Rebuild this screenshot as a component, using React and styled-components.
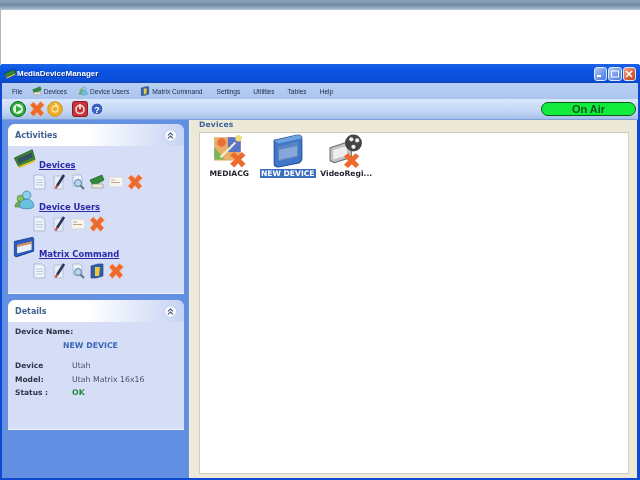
import React from "react";
import styled, { createGlobalStyle } from "styled-components";

const GlobalStyle = createGlobalStyle`
  html, body {
    margin: 0;
    padding: 0;
    width: 640px;
    height: 480px;
    overflow: hidden;
    background: #fff;
    font-family: "DejaVu Sans", Verdana, sans-serif;
  }
`;

const Page = styled.div`
  width: 640px;
  height: 480px;
  display: flex;
  flex-direction: column;
  overflow: hidden;
`;
const TopStrip = styled.div`
  height: 10px;
  background: linear-gradient(#8aa3bb, #6f8ba6 50%, #b3c3d3);
`;
const BlankBand = styled.div`
  height: 54px;
  background: #fff;
  border-left: 1px solid #b9b4a8;
`;
const Window = styled.div`
  flex: 1;
  display: flex;
  flex-direction: column;
  min-height: 0;
  background: #0f49d2;
  padding: 0 2px 2px 2px;
  border-radius: 3px 3px 0 0;
  filter: blur(0.35px);
`;
const TitleBar = styled.div`
  height: 19px;
  margin: 0 -2px;
  padding: 0 4px 0 4px;
  display: flex;
  align-items: center;
  gap: 1px;
  background: linear-gradient(#1b63e6, #0c55e2 30%, #0a50dc 80%, #0c46be);
  border-radius: 3px 3px 0 0;
`;
const LogoSlot = styled.span`
  display: flex;
`;
const TitleText = styled.span`
  flex: 1;
  color: #fff;
  font-family: "Liberation Sans", Arial, sans-serif;
  font-size: 8px;
  font-weight: bold;
  text-shadow: 1px 1px 0 #0a2f8c;
`;
const WinButton = styled.div`
  width: 13.5px;
  height: 14px;
  box-sizing: border-box;
  border: 1px solid #dfe8fb;
  border-radius: 3px;
  background: ${(p) =>
    p.$close
      ? "linear-gradient(135deg, #eea58a, #dd5f36 60%, #c2451f)"
      : "linear-gradient(135deg, #b4c9f5, #6e95e8 60%, #4f78da)"};
  display: flex;
  align-items: center;
  justify-content: center;
`;
const MenuBar = styled.div`
  height: 16px;
  display: flex;
  align-items: center;
  padding-left: 10px;
  background: linear-gradient(#b9cff3, #abc5ef);
  font-family: "Liberation Sans", Arial, sans-serif;
  font-size: 6.6px;
  color: #1c2a4a;
`;
const MenuItem = styled.span`
  display: flex;
  align-items: center;
  gap: 2px;
  margin-right: ${(p) => p.$gap}px;
`;
const MenuGlyph = styled.span`
  display: flex;
  svg {
    width: 10px;
    height: 10px;
  }
`;
const Toolbar = styled.div`
  height: 21px;
  display: flex;
  align-items: center;
  padding: 0 2px 0 8px;
  background: linear-gradient(#dbe8fb, #c3d7f6 60%, #a5bfe9);
  border-bottom: 1px solid #7f9fd8;
  box-sizing: border-box;
`;
const ToolIcon = styled.span`
  display: flex;
  margin-right: ${(p) => p.$gap || 0}px;
`;
const OnAir = styled.div`
  margin-left: auto;
  width: 95px;
  height: 14px;
  box-sizing: border-box;
  border: 1px solid #0c5a1a;
  border-radius: 7px;
  background: #12ec3c;
  color: #0b5a1c;
  font-family: "Liberation Sans", Arial, sans-serif;
  font-size: 11px;
  font-weight: bold;
  line-height: 12px;
  text-align: center;
`;
const Main = styled.div`
  flex: 1;
  min-height: 0;
  display: flex;
`;
const Sidebar = styled.div`
  width: 187px;
  padding: 4px 5px 0 6px;
  box-sizing: border-box;
  display: flex;
  flex-direction: column;
  gap: 6px;
  background: #6390e2;
`;
const Panel = styled.div`
  height: ${(p) => p.$height}px;
  display: flex;
  flex-direction: column;
  background: #d5def6;
  border-radius: 7px 7px 0 0;
  border-bottom: 1px solid #f0f4fc;
  box-sizing: border-box;
  overflow: hidden;
`;
const PanelHead = styled.div`
  height: 22px;
  flex-shrink: 0;
  display: flex;
  align-items: center;
  justify-content: space-between;
  padding: 0 7px;
  background: linear-gradient(90deg, #fff, #fff 45%, #c6d3f5);
  color: #40608f;
  font-size: 8px;
  font-weight: bold;
`;
const Chevron = styled.div`
  width: 11px;
  height: 11px;
  border-radius: 50%;
  background: #f5f7fd;
  border: 1px solid #c2cce6;
  display: flex;
  align-items: center;
  justify-content: center;
`;
const ActivityList = styled.div`
  padding: 1px 0 0 5px;
  display: flex;
  flex-direction: column;
`;
const Activity = styled.div`
  height: ${(p) => p.$height}px;
  display: grid;
  grid-template-columns: 26px auto;
  grid-template-rows: 24px auto;
  justify-content: start;
`;
const ActivityIcon = styled.div`
  grid-row: 1;
  grid-column: 1;
`;
const ActivityLink = styled.a`
  grid-row: 1;
  grid-column: 2;
  align-self: end;
  color: #2a2aa8;
  font-size: 8.4px;
  font-weight: bold;
  text-decoration: underline;
  line-height: 11px;
`;
const ActionRow = styled.div`
  grid-row: 2;
  grid-column: 2;
  display: flex;
  gap: 3px;
  margin: 2.5px 0 0 -7px;
`;
const Details = styled.div`
  padding: 5px 0 0 7px;
  font-size: 7.8px;
  color: #3a4256;
`;
const FieldLabel = styled.div`
  font-size: 7.5px;
  font-weight: bold;
  color: #2c3346;
`;
const DeviceTitle = styled.div`
  margin: 5px 0 9px 48px;
  color: #3a66b8;
  font-weight: bold;
`;
const InfoRow = styled.div`
  display: grid;
  grid-template-columns: 57px auto;
  height: 13.5px;
  align-items: center;
`;
const InfoValue = styled.span`
  color: ${(p) => p.$color || "#4a5268"};
  font-weight: ${(p) => (p.$bold ? "bold" : "normal")};
`;
const Content = styled.div`
  flex: 1;
  display: flex;
  flex-direction: column;
  background: #ece9d8;
  padding: 0 8px 4px 9px;
  margin-right: 1px;
  border-left: 1px solid #f4f2e6;
`;
const ContentTitle = styled.div`
  height: 12px;
  line-height: 10px;
  color: #3c5f98;
  font-size: 7.6px;
  font-weight: bold;
  letter-spacing: 0.2px;
`;
const Canvas = styled.div`
  flex: 1;
  background: #fff;
  border: 1px solid #cfccbd;
  padding: 1px 0 0 0;
  display: flex;
  align-items: flex-start;
`;
const DeviceItem = styled.div`
  width: 58.5px;
  display: flex;
  flex-direction: column;
  align-items: center;
  gap: 1px;
  font-size: 7.6px;
  font-weight: bold;
  color: #23262f;
`;
const DeviceLabel = styled.span`
  padding: 0 1px;
  line-height: 9px;
  white-space: nowrap;
  background: ${(p) => (p.$selected ? "#3a6fc0" : "transparent")};
  color: ${(p) => (p.$selected ? "#fff" : "inherit")};
`;

// icons
const Svg = ({ s = 16, children }) => (
  <svg width={s} height={s} viewBox="0 0 16 16" style={{ display: "block", overflow: "visible" }}>
    {children}
  </svg>
);
const Cross = ({ s = 16 }) => (
  <Svg s={s}>
    <path
      d="M1 4 4.500 1 8 4.500 11.500.5 15.500 4 11.500 8 15 12 11.500 15.500 8 11.500 4.500 15.500 1 12 4.500 8Z"
      fill="#ee6a2c"
      stroke="#f8b088"
      strokeWidth=".7"
    />
  </Svg>
);
const Doc = () => (
  <Svg>
    <path d="M2 1h8l3 3v11H2Z" fill="#eef3fb" stroke="#a9bbd6" />
    <path d="M4 6h7M4 8.500h7M4 11h7" stroke="#bccade" />
  </Svg>
);
const Pencil = () => (
  <Svg>
    <path d="M3 2h9v13H3Z" fill="#e8edf8" stroke="#b3c1da" />
    <path d="M13 1 6 12" stroke="#2c3558" strokeWidth="2.600" />
    <path d="M6.500 11 4.500 14.500" stroke="#b8452f" strokeWidth="2" />
  </Svg>
);
const Search = () => (
  <Svg>
    <path d="M3 1h7l2 2v9H3Z" fill="#eef3fb" stroke="#aebdd6" />
    <circle cx="8" cy="9" r="3.500" fill="#bcd5ea" stroke="#5d7ea8" />
    <path d="M10.500 11.500 14 15" stroke="#64748c" strokeWidth="2" />
  </Svg>
);
const Board = () => (
  <Svg>
    <path d="M1 6 13 1l2 5-11 6Z" fill="#2f8a3a" stroke="#16521f" strokeWidth=".6" />
    <path d="M3 10h11v4H3Z" fill="#eceadb" stroke="#8a8a78" strokeWidth=".6" />
  </Svg>
);
const CardDoc = () => (
  <Svg>
    <rect x="1" y="3" width="14" height="10" fill="#f6f6ee" stroke="#d2d6dc" />
    <path d="M3 6h4M3 8.500h9" stroke="#c2a48a" />
  </Svg>
);
const Book = () => (
  <Svg>
    <path d="M2 3 9 1h5v12l-7 2H2Z" fill="#2f5fa8" stroke="#1c3a78" strokeWidth=".6" />
    <path d="M6 4h5l-1 9H6Z" fill="#f2c93a" />
  </Svg>
);
const ChipLarge = () => (
  <Svg s={22}>
    <path d="M1 8 14 2l2 7-12 5Z" fill="#3a8a2c" stroke="#1f5a1c" strokeWidth=".6" />
    <path d="M3 8.500 13.500 4l1 3.500-10 4.500Z" fill="#345064" />
    <path d="M1 8l3 6 .5 1.500 11.500-5V9L4 14Z" fill="#d8c02c" />
  </Svg>
);
const UsersLarge = () => (
  <Svg s={22}>
    <circle cx="5.500" cy="7" r="2.500" fill="#8cc45a" stroke="#4a7a2c" strokeWidth=".5" />
    <path d="M1.500 13c0-3 2-4 4-4s3 1 3 4Z" fill="#72b04a" stroke="#4a7a2c" strokeWidth=".5" />
    <circle cx="10" cy="4.500" r="3" fill="#8fd0ea" stroke="#3f86ac" strokeWidth=".6" />
    <path d="M4.500 13c0-4 2.500-5.500 5.500-5.500s5 1.500 5 5.500c-2 1.800-8 1.800-10.500 0Z" fill="#6cc0de" stroke="#3f86ac" strokeWidth=".6" />
  </Svg>
);
const WindowLarge = () => (
  <Svg s={22}>
    <path d="M1 4 14 1c1 0 1 .5 1 1v9L3 15c-1.500.3-2-.3-2-1Z" fill="#2a5cc0" stroke="#123a8c" strokeWidth=".6" />
    <path d="M3 6.500 13.500 4v6L3 12.800Z" fill="#e9eef8" />
    <path d="M3 6.500 13.500 4v1.600L3 8Z" fill="#d68a4a" />
  </Svg>
);
const MediaIcon = () => (
  <svg width="34" height="34" viewBox="0 0 32 32" style={{ display: "block" }}>
    <rect x="2" y="3" width="25" height="22" fill="#e8b06a" />
    <path d="M15 3h12v14H15Z" fill="#5c74c6" />
    <path d="M2 12l10 12H2Z" fill="#78b85a" />
    <circle cx="9" cy="8" r="4" fill="#e86c3c" />
    <circle cx="25" cy="4" r="3" fill="#f0dc78" />
    <path d="M8 22 22 8" stroke="#f4ecc8" strokeWidth="2" />
    <path d="M17 20 21 17 24.500 20.500 28 17 31.500 20 27.500 24 31.500 28 28 31.500 24.500 27.500 21 31.500 17 28 21.500 24Z" fill="#ee6a2c" />
  </svg>
);
const NewDeviceIcon = () => (
  <svg width="34" height="34" viewBox="0 0 32 32" style={{ display: "block" }}>
    <path d="M3 6 25 1c3 0 4 1 4 3v20l-2 3-20 4c-3 0-4-1-4-3Z" fill="#3f78c8" stroke="#1d4c98" />
    <path d="M3 6 25 1c3 0 4 1 4 3L7 9Z" fill="#6fa2dc" />
    <path d="M7 12 25 8v13L7 25Z" fill="#85a8d8" stroke="#5f86c0" />
    <path d="M7 12 25 8v3L7 15Z" fill="#5a84c4" />
  </svg>
);
const VideoIcon = () => (
  <svg width="34" height="34" viewBox="0 0 32 32" style={{ display: "block" }}>
    <path d="M1 13 16 8l5 1v13L5 27l-4-2Z" fill="#c2c2c2" stroke="#6c6c6c" />
    <path d="M4 15 17 11v9L4 24Z" fill="#eeeeee" />
    <circle cx="23" cy="8.500" r="8" fill="#444" />
    <circle cx="21" cy="5" r="2" fill="#eee" />
    <circle cx="26.500" cy="6" r="2" fill="#eee" />
    <circle cx="23" cy="12" r="2" fill="#eee" />
    <path d="M14 21 18 18 21.500 21.500 25 18 28.500 21 24.500 25 28.500 29 25 32 21.500 28.500 18 32 14 29 18 25Z" fill="#ee6a2c" />
  </svg>
);
const Play = () => (
  <Svg>
    <circle cx="8" cy="8" r="7.500" fill="#2fae3a" stroke="#14661f" />
    <circle cx="8" cy="8" r="5" fill="#e6f5e2" />
    <path d="M6 4.500 12 8l-6 3.500Z" fill="#2fae3a" />
  </Svg>
);
const Gear = () => (
  <Svg>
    <circle cx="8" cy="8" r="7.300" fill="#f0ae28" stroke="#d69218" />
    <circle cx="8" cy="8" r="3" fill="none" stroke="#fbe6a4" strokeWidth="1.400" />
    <path d="M8 2 11 6" stroke="#fbe6a4" strokeWidth="1.400" />
  </Svg>
);
const Power = () => (
  <Svg>
    <rect x=".5" y=".5" width="15" height="15" rx="2" fill="#c8343c" stroke="#8c1c24" />
    <circle cx="8" cy="8.500" r="4" fill="none" stroke="#f6dede" strokeWidth="1.600" />
    <path d="M8 3v5" stroke="#f6dede" strokeWidth="1.800" />
  </Svg>
);
const Help = () => (
  <svg width="14" height="14" viewBox="0 0 14 14" style={{ display: "block" }}>
    <circle cx="7" cy="7" r="6" fill="#3a62c4" stroke="#e6ecf8" />
    <text x="7" y="10.500" textAnchor="middle" fontSize="9.500" fontWeight="bold" fill="#fff" fontFamily="Liberation Sans">?</text>
  </svg>
);
const DoubleUp = () => (
  <svg width="7" height="7" viewBox="0 0 7 7" style={{ display: "block" }}>
    <path d="M1 3.300 3.500 1 6 3.300M1 6.300 3.500 4 6 6.300" fill="none" stroke="#4a5a78" strokeWidth="1.100" />
  </svg>
);
const AppLogo = () => (
  <svg width="12" height="12" viewBox="0 0 16 16" style={{ display: "block" }}>
    <path d="M1 7 14 2l1 5-11 5Z" fill="#2f8a3a" stroke="#16301f" strokeWidth=".8" />
    <path d="M1 7l3 5 11-5v2L4 14Z" fill="#d8c02c" />
  </svg>
);

const menus = [
  { label: "File", gap: 9 },
  { label: "Devices", icon: <Board />, gap: 11 },
  { label: "Device Users", icon: <UsersLarge />, gap: 11 },
  { label: "Matrix Command", icon: <Book />, gap: 14 },
  { label: "Settings", gap: 13 },
  { label: "Utilities", gap: 13 },
  { label: "Tables", gap: 13 },
  { label: "Help", gap: 0 },
];

const activities = [
  { label: "Devices", icon: <ChipLarge />, actions: [Doc, Pencil, Search, Board, CardDoc, Cross], height: 42 },
  { label: "Device Users", icon: <UsersLarge />, actions: [Doc, Pencil, CardDoc, Cross], height: 47 },
  { label: "Matrix Command", icon: <WindowLarge />, actions: [Doc, Pencil, Search, Book, Cross], height: 46 },
];

const info = [
  { label: "Device", value: "Utah" },
  { label: "Model:", value: "Utah Matrix 16x16" },
  { label: "Status :", value: "OK", color: "#1f8a3a", bold: true },
];

const devices = [
  { label: "MEDIACG", icon: <MediaIcon /> },
  { label: "NEW DEVICE", icon: <NewDeviceIcon />, selected: true },
  { label: "VideoRegi...", icon: <VideoIcon /> },
];

export default function App() {
  return (
    <Page>
      <GlobalStyle />
      <TopStrip />
      <BlankBand />
      <Window>
        <TitleBar>
          <LogoSlot><AppLogo /></LogoSlot>
          <TitleText>MediaDeviceManager</TitleText>
          <WinButton>
            <svg width="7" height="7" viewBox="0 0 7 7"><path d="M0 6h4" stroke="#fff" strokeWidth="2" /></svg>
          </WinButton>
          <WinButton>
            <svg width="8" height="8" viewBox="0 0 8 8"><rect x=".5" y="1" width="7" height="6" fill="none" stroke="#fff" /></svg>
          </WinButton>
          <WinButton $close>
            <svg width="8" height="8" viewBox="0 0 8 8"><path d="M1 1 7 7M7 1 1 7" stroke="#fff" strokeWidth="1.600" /></svg>
          </WinButton>
        </TitleBar>
        <MenuBar>
          {menus.map((m) => (
            <MenuItem key={m.label} $gap={m.gap}>
              {m.icon && <MenuGlyph>{m.icon}</MenuGlyph>}
              {m.label}
            </MenuItem>
          ))}
        </MenuBar>
        <Toolbar>
          <ToolIcon $gap={3}><Play /></ToolIcon>
          <ToolIcon $gap={2}><Cross /></ToolIcon>
          <ToolIcon $gap={9}><Gear /></ToolIcon>
          <ToolIcon $gap={2}><Power /></ToolIcon>
          <ToolIcon><Help /></ToolIcon>
          <OnAir>On Air</OnAir>
        </Toolbar>
        <Main>
          <Sidebar>
            <Panel $height={170}>
              <PanelHead>
                Activities
                <Chevron><DoubleUp /></Chevron>
              </PanelHead>
              <ActivityList>
                {activities.map((a) => (
                  <Activity key={a.label} $height={a.height}>
                    <ActivityIcon>{a.icon}</ActivityIcon>
                    <ActivityLink>{a.label}</ActivityLink>
                    <ActionRow>
                      {a.actions.map((Icon, i) => (
                        <Icon key={i} />
                      ))}
                    </ActionRow>
                  </Activity>
                ))}
              </ActivityList>
            </Panel>
            <Panel $height={130}>
              <PanelHead>
                Details
                <Chevron><DoubleUp /></Chevron>
              </PanelHead>
              <Details>
                <FieldLabel>Device Name:</FieldLabel>
                <DeviceTitle>NEW DEVICE</DeviceTitle>
                {info.map((r) => (
                  <InfoRow key={r.label}>
                    <FieldLabel>{r.label}</FieldLabel>
                    <InfoValue $color={r.color} $bold={r.bold}>{r.value}</InfoValue>
                  </InfoRow>
                ))}
              </Details>
            </Panel>
          </Sidebar>
          <Content>
            <ContentTitle>Devices</ContentTitle>
            <Canvas>
              {devices.map((d) => (
                <DeviceItem key={d.label}>
                  {d.icon}
                  <DeviceLabel $selected={d.selected}>{d.label}</DeviceLabel>
                </DeviceItem>
              ))}
            </Canvas>
          </Content>
        </Main>
      </Window>
    </Page>
  );
}
